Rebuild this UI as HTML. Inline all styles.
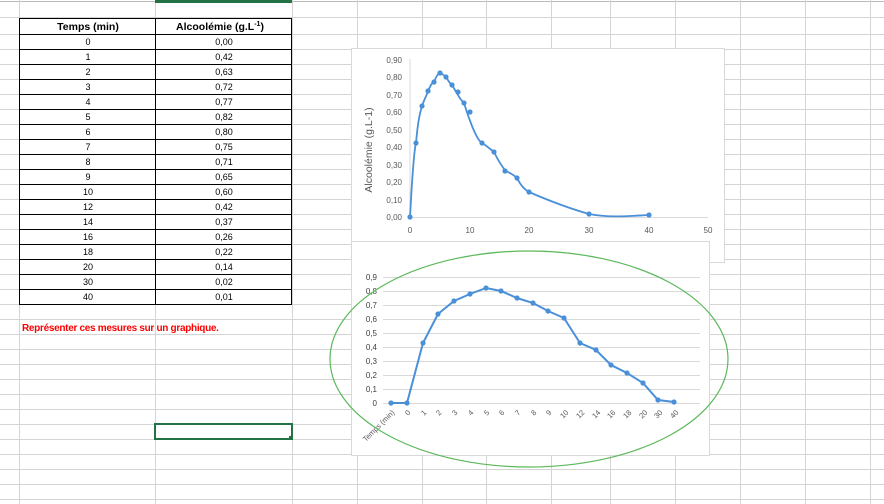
<!DOCTYPE html>
<html><head><meta charset="utf-8"><style>
html,body{margin:0;padding:0;width:884px;height:504px;overflow:hidden;background:#fff}
svg{display:block}
text{font-family:"Liberation Sans",sans-serif}
</style></head><body>
<svg width="884" height="504" xmlns="http://www.w3.org/2000/svg">
<g stroke="#d4d4d4" stroke-width="1">
<line x1="0" y1="1.5" x2="884" y2="1.5" stroke="#bbb"/>
<line x1="0" y1="17.5" x2="884" y2="17.5"/>
<path d="M0 34.5H884M0 49.5H884M0 64.5H884M0 79.5H884M0 94.5H884M0 109.5H884M0 124.5H884M0 139.5H884M0 154.5H884M0 169.5H884M0 184.5H884M0 199.5H884M0 214.5H884M0 229.5H884M0 244.5H884M0 259.5H884M0 274.5H884M0 289.5H884M0 304.5H884M0 319.5H884M0 334.5H884M0 349.5H884M0 364.5H884M0 379.5H884M0 394.5H884M0 409.5H884M0 424.5H884M0 439.5H884M0 454.5H884M0 469.5H884M0 484.5H884M0 499.5H884"/>
<path d="M19.5 0V504M155.5 0V504M292.5 0V504M357.5 0V504M422.5 0V504M486.5 0V504M551.5 0V504M610.5 0V504M675.5 0V504M740.5 0V504M805.5 0V504M870.5 0V504"/>
</g>
<rect x="155" y="0" width="137" height="3" fill="#217346"/>
<!-- table -->
<rect x="19.5" y="18.5" width="272" height="286" fill="#fff" stroke="#000"/>
<g stroke="#000" stroke-width="1">
<line x1="155.5" y1="18" x2="155.5" y2="305"/>
<path d="M19 34.5H292M19 49.5H292M19 64.5H292M19 79.5H292M19 94.5H292M19 109.5H292M19 124.5H292M19 139.5H292M19 154.5H292M19 169.5H292M19 184.5H292M19 199.5H292M19 214.5H292M19 229.5H292M19 244.5H292M19 259.5H292M19 274.5H292M19 289.5H292"/>
</g>
<g font-size="10.5" font-weight="bold" text-anchor="middle" fill="#000">
<text x="88" y="30">Temps (min)</text>
<text x="220" y="30">Alcoolémie (g.L<tspan dy="-4" font-size="7">-1</tspan><tspan dy="4">)</tspan></text>
</g>
<g font-size="9" text-anchor="middle" fill="#000">
<text x="88" y="45">0</text><text x="224" y="45">0,00</text>
<text x="88" y="60">1</text><text x="224" y="60">0,42</text>
<text x="88" y="75">2</text><text x="224" y="75">0,63</text>
<text x="88" y="90">3</text><text x="224" y="90">0,72</text>
<text x="88" y="105">4</text><text x="224" y="105">0,77</text>
<text x="88" y="120">5</text><text x="224" y="120">0,82</text>
<text x="88" y="135">6</text><text x="224" y="135">0,80</text>
<text x="88" y="150">7</text><text x="224" y="150">0,75</text>
<text x="88" y="165">8</text><text x="224" y="165">0,71</text>
<text x="88" y="180">9</text><text x="224" y="180">0,65</text>
<text x="88" y="195">10</text><text x="224" y="195">0,60</text>
<text x="88" y="210">12</text><text x="224" y="210">0,42</text>
<text x="88" y="225">14</text><text x="224" y="225">0,37</text>
<text x="88" y="240">16</text><text x="224" y="240">0,26</text>
<text x="88" y="255">18</text><text x="224" y="255">0,22</text>
<text x="88" y="270">20</text><text x="224" y="270">0,14</text>
<text x="88" y="285">30</text><text x="224" y="285">0,02</text>
<text x="88" y="300">40</text><text x="224" y="300">0,01</text>
</g>
<text x="22" y="331" font-size="10" font-weight="bold" fill="#ff0000" letter-spacing="-0.3">Représenter ces mesures sur un graphique.</text>
<rect x="155" y="424" width="137" height="15" fill="none" stroke="#217346" stroke-width="2"/>
<rect x="289" y="436" width="4" height="4" fill="#217346"/>

<!-- chart 1 -->
<rect x="351.5" y="48.5" width="373" height="214" fill="#fff" stroke="#d9d9d9"/>
<g stroke="#d9d9d9"><line x1="410" y1="217.5" x2="708" y2="217.5"/><line x1="410" y1="59" x2="410" y2="217"/></g>
<g font-size="8" fill="#595959" text-anchor="end">
<text x="402" y="220">0,00</text><text x="402" y="203">0,10</text><text x="402" y="185">0,20</text><text x="402" y="168">0,30</text><text x="402" y="150">0,40</text><text x="402" y="133">0,50</text><text x="402" y="115">0,60</text><text x="402" y="98">0,70</text><text x="402" y="80">0,80</text><text x="402" y="63">0,90</text>
</g>
<g font-size="8" fill="#595959" text-anchor="middle">
<text x="410" y="233">0</text><text x="470" y="233">10</text><text x="529" y="233">20</text><text x="589" y="233">30</text><text x="649" y="233">40</text><text x="708" y="233">50</text>
</g>
<text transform="translate(372,150) rotate(-90)" font-size="10.5" fill="#595959" text-anchor="middle">Alcoolémie (g.L-1)</text>
<path d="M410 217 C412 180 414 150 416 143 C418 120 420 113 422 106 C424 100 426 97 428 91 C430 87 432 82 434 82 C436 77 438 73 440 73 C442 74 444 75 446 77 C448 80 450 84 452 85 C454 88 456 92 458 95 C460 99 462 101 464 103 C467 113 476 140 482 143 C487 146 490 149 494 152 C497 158 502 167 506 171 C510 173 515 176 517 178 C521 186 525 190 529 192 C552 202 575 210 589 214 C610 218 630 216 649 215" fill="none" stroke="#4a90d9" stroke-width="1.8"/>
<g fill="#4a90d9">
<circle cx="410" cy="217" r="2.6"/><circle cx="416" cy="143" r="2.6"/><circle cx="422" cy="106" r="2.6"/><circle cx="428" cy="91" r="2.6"/><circle cx="434" cy="82" r="2.6"/><circle cx="440" cy="73" r="2.6"/><circle cx="446" cy="77" r="2.6"/><circle cx="452" cy="85" r="2.6"/><circle cx="458" cy="92" r="2.6"/><circle cx="464" cy="103" r="2.6"/><circle cx="470" cy="112" r="2.6"/><circle cx="482" cy="143" r="2.6"/><circle cx="494" cy="152" r="2.6"/><circle cx="505" cy="171" r="2.6"/><circle cx="517" cy="178" r="2.6"/><circle cx="529" cy="192" r="2.6"/><circle cx="589" cy="214" r="2.6"/><circle cx="649" cy="215" r="2.6"/>
</g>

<!-- chart 2 -->
<rect x="351.5" y="241.5" width="358" height="214" fill="#fff" stroke="#d9d9d9"/>
<g stroke="#d9d9d9">
<path d="M383 277.5H700M383 291.5H700M383 305.5H700M383 319.5H700M383 333.5H700M383 347.5H700M383 361.5H700M383 375.5H700M383 389.5H700M383 403.5H700"/>
</g>
<g font-size="8" fill="#404040" text-anchor="end">
<text x="377" y="406">0</text><text x="377" y="392">0,1</text><text x="377" y="378">0,2</text><text x="377" y="364">0,3</text><text x="377" y="350">0,4</text><text x="377" y="336">0,5</text><text x="377" y="322">0,6</text><text x="377" y="308">0,7</text><text x="377" y="294">0,8</text><text x="377" y="280">0,9</text>
</g>
<polyline points="391,403 407,403 423,393 438,397" fill="none" stroke="none"/>
<polyline points="391,403 407,403 423,343 438,314 454,301 470,294 486,288 501,291 517,298 533,303 548,311 564,318 580,343 596,350 611,365 627,373 643,383 658,400 674,402" fill="none" stroke="#4a90d9" stroke-width="2"/>
<g fill="#4a90d9">
<circle cx="391" cy="403" r="2.6"/><circle cx="407" cy="403" r="2.6"/><circle cx="423" cy="343" r="2.6"/><circle cx="438" cy="314" r="2.6"/><circle cx="454" cy="301" r="2.6"/><circle cx="470" cy="294" r="2.6"/><circle cx="486" cy="288" r="2.6"/><circle cx="501" cy="291" r="2.6"/><circle cx="517" cy="298" r="2.6"/><circle cx="533" cy="303" r="2.6"/><circle cx="548" cy="311" r="2.6"/><circle cx="564" cy="318" r="2.6"/><circle cx="580" cy="343" r="2.6"/><circle cx="596" cy="350" r="2.6"/><circle cx="611" cy="365" r="2.6"/><circle cx="627" cy="373" r="2.6"/><circle cx="643" cy="383" r="2.6"/><circle cx="658" cy="400" r="2.6"/><circle cx="674" cy="402" r="2.6"/>
</g>
<g font-size="7.5" fill="#595959" text-anchor="end">
<text transform="translate(395,413) rotate(-45)">Temps (min)</text>
<text transform="translate(411,413) rotate(-45)">0</text>
<text transform="translate(427,413) rotate(-45)">1</text>
<text transform="translate(442,413) rotate(-45)">2</text>
<text transform="translate(458,413) rotate(-45)">3</text>
<text transform="translate(474,413) rotate(-45)">4</text>
<text transform="translate(490,413) rotate(-45)">5</text>
<text transform="translate(505,413) rotate(-45)">6</text>
<text transform="translate(521,413) rotate(-45)">7</text>
<text transform="translate(537,413) rotate(-45)">8</text>
<text transform="translate(552,413) rotate(-45)">9</text>
<text transform="translate(569,413) rotate(-45)">10</text>
<text transform="translate(585,413) rotate(-45)">12</text>
<text transform="translate(601,413) rotate(-45)">14</text>
<text transform="translate(616,413) rotate(-45)">16</text>
<text transform="translate(632,413) rotate(-45)">18</text>
<text transform="translate(648,413) rotate(-45)">20</text>
<text transform="translate(663,413) rotate(-45)">30</text>
<text transform="translate(679,413) rotate(-45)">40</text>
</g>
<ellipse cx="529" cy="359" rx="199" ry="108" fill="none" stroke="#5cb85c" stroke-width="1.2"/>
</svg>
</body></html>
